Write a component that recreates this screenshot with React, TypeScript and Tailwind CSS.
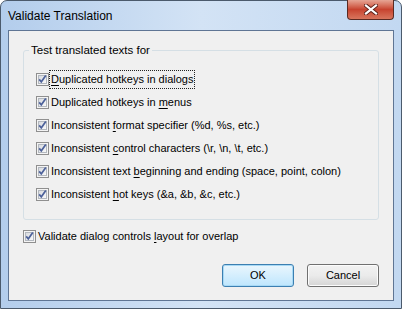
import React from "react";

type Item = { before: string; key: string; after: string; focused?: boolean };

const items: Item[] = [
  { before: "", key: "D", after: "uplicated hotkeys in dialogs", focused: true },
  { before: "Duplicated hotkeys in ", key: "m", after: "enus" },
  { before: "Inconsistent ", key: "f", after: "ormat specifier (%d, %s, etc.)" },
  { before: "Inconsistent ", key: "c", after: "ontrol characters (\\r, \\n, \\t, etc.)" },
  { before: "Inconsistent text ", key: "b", after: "eginning and ending (space, point, colon)" },
  { before: "Inconsistent ", key: "h", after: "ot keys (&a, &b, &c, etc.)" },
];

// win7 style checked box
const CheckBox = () => (
  <svg width="13" height="13" viewBox="0 0 13 13" className="shrink-0">
    <defs>
      <linearGradient id="cbFill" x1="0" y1="0" x2="1" y2="1">
        <stop offset="0" stopColor="#d6d9de" />
        <stop offset="1" stopColor="#fbfbfb" />
      </linearGradient>
    </defs>
    <rect x="0.5" y="0.5" width="12" height="12" fill="#f4f4f4" stroke="#8f8f8f" />
    <rect x="2.5" y="2.5" width="8" height="8" fill="url(#cbFill)" stroke="#b3b8bf" />
    <path d="M3.2 6.4 L5.3 8.8 L9.8 2.6" fill="none" stroke="#4c619a" strokeWidth="1.7" />
  </svg>
);

const Label = ({ item }: { item: Item }) => (
  <span
    className={
      item.focused
        ? "outline outline-1 outline-dotted outline-[#222] outline-offset-0 px-[1px]"
        : "px-[1px]"
    }
  >
    {item.before}
    <span className="underline underline-offset-[2px]">{item.key}</span>
    {item.after}
  </span>
);

export default function App() {
  return (
    <div
      className="w-[402px] h-[309px] flex flex-col rounded-t-[7px] border border-[#4b5a6c] bg-gradient-to-r from-[#b3cdec] via-[#d3e3f5] to-[#c2d8f1] px-[7px] pb-[7px] text-[#000]"
      style={{ fontFamily: '"Liberation Sans", Arial, sans-serif' }}
    >
      {/* title bar */}
      <div className="h-[29px] flex items-start justify-between shrink-0">
        <div className="pt-[6px] text-[12px] text-[#000]">Validate Translation</div>
        <div className="-mt-[1px] w-[47px] h-[20px] rounded-b-[4px] border border-t-0 border-[#5a2a22] bg-gradient-to-b from-[#e6a595] via-[#c7432f] to-[#d8755d] flex items-center justify-center">
          <svg width="14" height="11" viewBox="0 0 14 11">
            <path d="M2 1.5 L12 9.5 M12 1.5 L2 9.5" stroke="#5b2018" strokeWidth="4" strokeLinecap="square" />
            <path d="M2 1.5 L12 9.5 M12 1.5 L2 9.5" stroke="#ffffff" strokeWidth="2.2" strokeLinecap="square" />
          </svg>
        </div>
      </div>

      {/* client area */}
      <div className="flex-1 border border-[#5f7594] bg-[#f0f0f0] flex flex-col px-[14px] text-[11px]">
        <fieldset className="mt-[12px] border border-[#d5dfe5] rounded-[3px] pl-[12px] pr-[8px] pb-[13px]">
          <legend className="-ml-[7px] px-[2px] leading-[14px] text-[11.5px]">Test translated texts for</legend>
          <div className="flex flex-col pt-[11px]">
            {items.map((it, i) => (
              <div key={i} className="h-[23px] flex items-center gap-[1px]">
                <CheckBox />
                <Label item={it} />
              </div>
            ))}
          </div>
        </fieldset>

        <div className="mt-[5px] h-[23px] flex items-center gap-[2px]">
          <CheckBox />
          <span>
            Validate dialog controls <span className="underline underline-offset-[2px]">l</span>ayout for overlap
          </span>
        </div>

        <div className="mt-auto mb-[13px] flex justify-end gap-[13px]">
          <button className="w-[72px] h-[23px] rounded-[3px] border border-[#3c7fb1] bg-gradient-to-b from-[#eaf6fd] to-[#bee6fd] shadow-[inset_0_0_0_1px_#a7d9f5]">
            OK
          </button>
          <button className="w-[72px] h-[23px] rounded-[3px] border border-[#707070] bg-gradient-to-b from-[#f2f2f2] via-[#ebebeb] to-[#d5d5d5] shadow-[inset_0_0_0_1px_#fcfcfc]">
            Cancel
          </button>
        </div>
      </div>
    </div>
  );
}
